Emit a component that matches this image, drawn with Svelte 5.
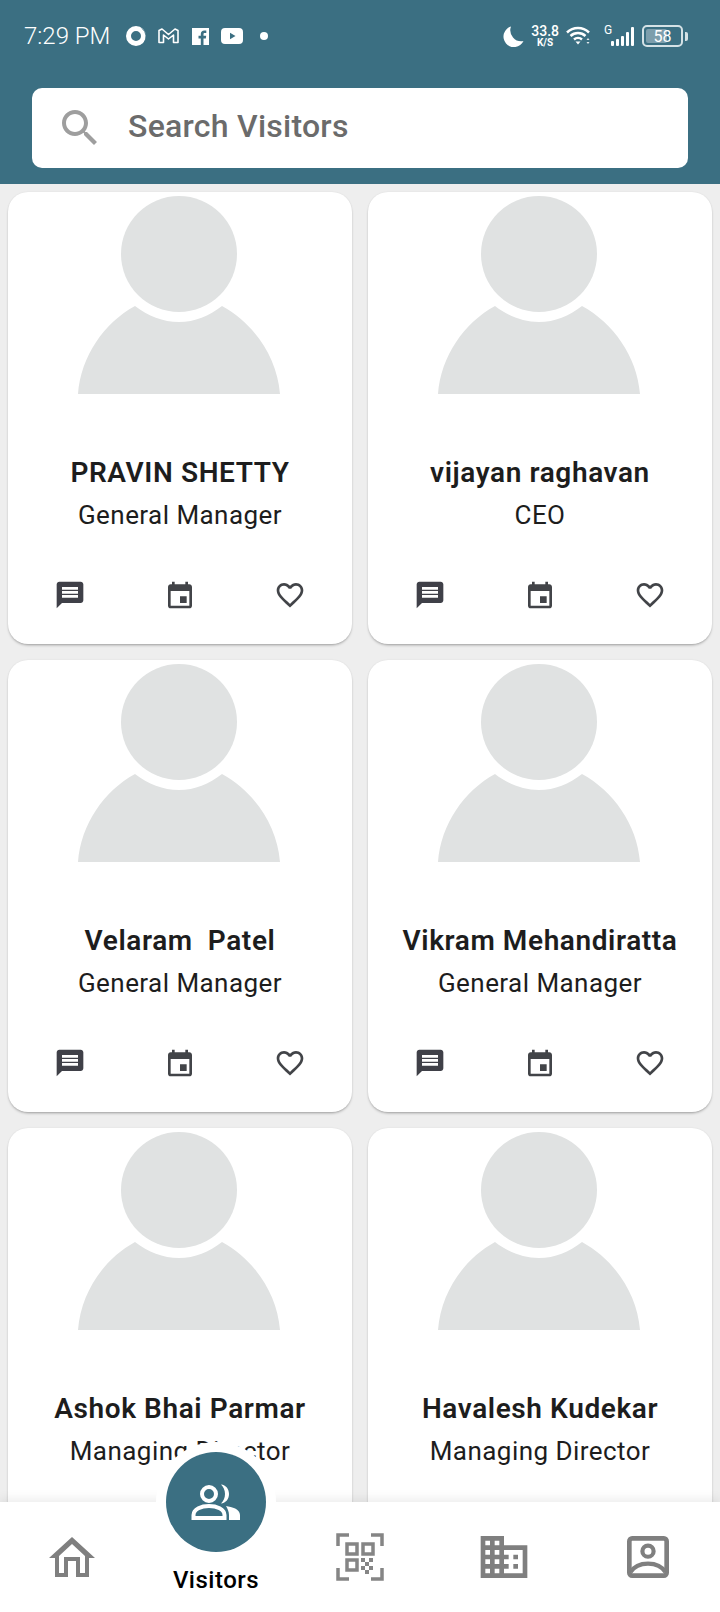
<script lang="ts">
  const visitors = [
    { name: 'PRAVIN SHETTY', role: 'General Manager' },
    { name: 'vijayan raghavan', role: 'CEO' },
    { name: 'Velaram  Patel', role: 'General Manager' },
    { name: 'Vikram Mehandiratta', role: 'General Manager' },
    { name: 'Ashok Bhai Parmar', role: 'Managing Director' },
    { name: 'Havalesh Kudekar', role: 'Managing Director' }
  ];
</script>

<div class="screen">
  <header class="top">
    <div class="status">
      <span class="clock">7:29 PM</span>
      <div class="notif">
        <svg width="22" height="22" viewBox="0 0 22 22"><circle cx="11" cy="11" r="7.500" fill="none" stroke="#fff" stroke-width="5"/><path d="M17 3.500a10 10 0 0 1 2 14" fill="none" stroke="#3b6f82" stroke-width=".8"/></svg>
        <svg width="21" height="16" viewBox="0 0 21 16"><path d="M1 14.500V2.500L4 1l6.500 5.500L17 1l3 1.500v12h-4.500V7l-5 4-5-4v7.500z" fill="none" stroke="#fff" stroke-width="1.600" stroke-linejoin="round"/></svg>
        <svg width="17" height="17" viewBox="0 0 17 17"><path fill="#fff" d="M0 0h17v17h-5.500v-6.500h2.300l.4-2.700h-2.700V6.200c0-.8.3-1.300 1.400-1.300h1.400V2.500c-.4 0-1.200-.1-2-.1-2.100 0-3.500 1.300-3.500 3.500v1.900H6.500v2.700h2.300V17H0z"/></svg>
        <svg width="22" height="16" viewBox="0 0 22 16"><path fill="#fff" fill-rule="evenodd" d="M4 0h14a4 4 0 0 1 4 4v8a4 4 0 0 1-4 4H4a4 4 0 0 1-4-4V4a4 4 0 0 1 4-4zm5 4.800v6.400L14.500 8z"/></svg>
        <span class="dot"></span>
      </div>
      <div class="sys">
        <svg width="21" height="21" viewBox="0 0 21 21"><path fill="#fff" d="M8 .5A10.500 10.500 0 1 0 20.500 15 11 11 0 0 1 8 .5z"/></svg>
        <div class="speed"><span>33.8</span><small>K/S</small></div>
        <svg width="25" height="20" viewBox="0 0 25 20">
          <path d="M1 6.500a16 16 0 0 1 22 0M4.500 10a11 11 0 0 1 15 0M8 13.500a6 6 0 0 1 8 0" fill="none" stroke="#fff" stroke-width="2.500"/>
          <path d="M9.500 15.500h5L12 18.500z" fill="#fff"/>
          <path d="M20.500 14h3l-1.500-2zM20.500 16h3L22 18z" fill="#fff" opacity=".85"/>
        </svg>
        <div class="net">
          <span class="g">G</span>
          <svg width="24" height="20" viewBox="0 0 24 20"><g fill="#fff"><rect x="0" y="15" width="3" height="5" rx="1"/><rect x="5" y="13" width="3" height="7" rx="1"/><rect x="10" y="10" width="3" height="10" rx="1"/><rect x="15" y="6" width="3" height="14" rx="1"/><rect x="20" y="1" width="3" height="19" rx="1"/></g></svg>
        </div>
        <div class="battery"><i class="level"></i><b>58</b></div>
        <span class="tip"></span>
      </div>
    </div>
    <div class="search">
      <svg width="48" height="48" viewBox="0 0 24 24"><path fill="#9e9e9e" d="M15.500 14h-.79l-.28-.27C15.410 12.590 16 11.110 16 9.500 16 5.910 13.090 3 9.500 3S3 5.910 3 9.500 5.910 16 9.500 16c1.610 0 3.090-.59 4.230-1.570l.27.28v.79l5 4.990L20.490 19l-4.990-5zm-6 0C7.010 14 5 11.990 5 9.500S7.010 5 9.500 5 14 7.010 14 9.500 11.990 14 9.500 14z"/></svg>
      <span class="placeholder">Search Visitors</span>
    </div>
  </header>

  <main class="list">
    {#each visitors as v}
      <article class="card">
        <svg class="avatar" width="204" height="198" viewBox="0 0 204 198">
          <circle cx="101" cy="58" r="58" fill="#e0e2e2"/>
          <path fill="#e0e2e2" d="M0 198C3 160 26 127 57 110C70 120 85 126 101 126C117 126 131 120 144 110C175 127 199 160 202 198z"/>
        </svg>
        <h2 class="name">{v.name}</h2>
        <p class="role">{v.role}</p>
        <div class="actions">
          <svg width="32" height="32" viewBox="0 0 24 24"><path fill="#3f4048" d="M20 2H4c-1.100 0-1.990.9-1.990 2L2 22l4-4h14c1.100 0 2-.9 2-2V4c0-1.100-.9-2-2-2zm-2 12H6v-2h12v2zm0-3H6V9h12v2zm0-3H6V6h12v2z"/></svg>
          <svg width="32" height="32" viewBox="0 0 24 24"><path fill="#424448" d="M19 4h-1V2h-2v2H8V2H6v2H5c-1.110 0-1.990.9-1.990 2L3 20c0 1.100.89 2 2 2h14c1.100 0 2-.9 2-2V6c0-1.100-.9-2-2-2zm0 16H5V9h14v11zm-2-7h-5v5h5v-5z"/></svg>
          <svg width="32" height="32" viewBox="0 0 24 24"><path fill="#424448" d="M16.500 3c-1.740 0-3.410.81-4.500 2.090C10.910 3.810 9.240 3 7.500 3 4.420 3 2 5.420 2 8.500c0 3.780 3.400 6.860 8.550 11.540L12 21.350l1.450-1.320C18.600 15.360 22 12.280 22 8.500 22 5.420 19.580 3 16.500 3zm-4.400 15.550l-.1.1-.1-.1C7.140 14.240 4 11.390 4 8.500 4 6.500 5.500 5 7.500 5c1.540 0 3.040.99 3.570 2.360h1.870C13.460 5.990 14.960 5 16.500 5c2 0 3.500 1.500 3.500 3.500 0 2.890-3.140 5.740-7.900 10.050z"/></svg>
        </div>
      </article>
    {/each}
  </main>

  <nav class="bar">
    <div class="item">
      <svg width="48" height="42" viewBox="0 0 48 42"><path fill="#7f7f7f" fill-rule="evenodd" d="M24 1L1 22h6v19h13V25h8v16h13V22h6zM24 8l13 12v17h-5V21H16v16h-5V20z"/></svg>
    </div>
    <div class="item">
      <div class="fab-ring">
        <div class="fab">
          <svg width="50" height="38" viewBox="0 0 50 38">
            <circle cx="18" cy="11" r="7" fill="none" stroke="#fff" stroke-width="4"/>
            <path fill="#fff" d="M30 1.500c5 .5 8 4.500 8 9.500s-3 9-8 9.500c2.500-2.500 4-5.800 4-9.500s-1.500-7-4-9.500z"/>
            <path fill="none" stroke="#fff" stroke-width="4" d="M2.500 35v-3c0-6 8-9 15.500-9s15.500 3 15.500 9v3z"/>
            <path fill="#fff" d="M35 23c6 .8 14 3.200 14 9v5h-11v-5c0-3.500-1.500-6.500-3-9z"/>
          </svg>
        </div>
      </div>
      <span class="label">Visitors</span>
    </div>
    <div class="item">
      <svg width="48" height="48" viewBox="0 0 48 48">
        <g fill="none" stroke="#858585" stroke-width="3.500">
          <path d="M13 2H2v11M35 2h11v11M13 46H2V35M35 46h11V35"/>
          <rect x="11" y="11" width="10" height="10"/>
          <rect x="27" y="11" width="10" height="10"/>
          <rect x="11" y="27" width="10" height="10"/>
        </g>
        <g fill="#858585">
          <rect x="25" y="25" width="4" height="4"/><rect x="33" y="25" width="4" height="4"/>
          <rect x="29" y="29" width="4" height="4"/><rect x="25" y="33" width="4" height="4"/>
          <rect x="33" y="33" width="4" height="4"/><rect x="29" y="37" width="4" height="4"/>
        </g>
      </svg>
    </div>
    <div class="item">
      <svg width="56" height="56" viewBox="0 0 24 24"><path fill="#7f7f7f" d="M12 7V3H2v18h20V7H12zM6 19H4v-2h2v2zm0-4H4v-2h2v2zm0-4H4V9h2v2zm0-4H4V5h2v2zm4 12H8v-2h2v2zm0-4H8v-2h2v2zm0-4H8V9h2v2zm0-4H8V5h2v2zm10 12h-8v-2h2v-2h-2v-2h2v-2h-2V9h8v10zm-2-8h-2v2h2v-2zm0 4h-2v2h2v-2z"/></svg>
    </div>
    <div class="item">
      <svg width="56" height="56" viewBox="0 0 24 24">
        <rect x="4" y="4" width="16" height="16" rx="1.200" fill="none" stroke="#7f7f7f" stroke-width="2"/>
        <circle cx="12" cy="9.500" r="2.400" fill="none" stroke="#7f7f7f" stroke-width="1.800"/>
        <path d="M4.500 18.500C6 16 9 14.800 12 14.800s6 1.200 7.500 3.700" fill="none" stroke="#7f7f7f" stroke-width="1.800"/>
      </svg>
    </div>
  </nav>
</div>

<style>
  :global(body) {
    margin: 0;
    background: #eeeeee;
  }

  .screen {
    width: 720px;
    height: 1612px;
    display: flex;
    flex-direction: column;
    overflow: hidden;
    background: #eeeeee;
    font-family: Roboto, "Liberation Sans", sans-serif;
  }

  .top {
    height: 184px;
    flex-shrink: 0;
    background: #3b6f82;
    box-sizing: border-box;
    padding: 0 32px 16px;
  }

  .status {
    height: 72px;
    margin: 0 0 16px -8px;
    display: flex;
    align-items: center;
    color: #fff;
  }

  .clock {
    font-size: 24px;
    font-weight: 300;
    width: 96px;
    flex-shrink: 0;
  }

  .notif {
    display: grid;
    grid-auto-flow: column;
    grid-auto-columns: 32px;
    align-items: center;
    justify-items: center;
  }

  .dot {
    width: 8px;
    height: 8px;
    border-radius: 50%;
    background: #fff;
  }

  .sys {
    margin-left: auto;
    display: flex;
    align-items: center;
  }

  .speed {
    display: flex;
    flex-direction: column;
    align-items: center;
    margin: 0 7px 0 7px;
    font-size: 14px;
    font-weight: 500;
    line-height: 13px;
  }

  .speed small {
    font-size: 10px;
    line-height: 10px;
    font-weight: 700;
  }

  .net {
    position: relative;
    display: flex;
    align-items: flex-end;
    margin-left: 13px;
    padding-left: 7px;
  }

  .g {
    font-size: 12px;
    line-height: 12px;
    position: absolute;
    left: 0;
    top: -2px;
  }

  .battery {
    position: relative;
    box-sizing: border-box;
    width: 41px;
    height: 22px;
    margin-left: 7px;
    border: 2px solid #d5e2e6;
    border-radius: 5px;
    display: flex;
    align-items: center;
    justify-content: center;
  }

  .level {
    position: absolute;
    left: 2px;
    top: 2px;
    bottom: 2px;
    width: 21px;
    background: #7d9eac;
    border-radius: 2px;
  }

  .battery b {
    position: relative;
    font-size: 16px;
    font-weight: 400;
  }

  .tip {
    width: 3px;
    height: 9px;
    margin-left: 2px;
    background: #d5e2e6;
    border-radius: 0 2px 2px 0;
  }

  .search {
    height: 80px;
    background: #fff;
    border-radius: 10px;
    display: flex;
    align-items: center;
    padding-left: 24px;
  }

  .placeholder {
    margin: -5px 0 0 24px;
    font-size: 32px;
    font-weight: 500;
    letter-spacing: 0.25px;
    color: #6b6b6b;
  }

  .list {
    flex: 1;
    min-height: 0;
    box-sizing: border-box;
    padding: 8px;
    display: grid;
    grid-template-columns: 344px 344px;
    grid-auto-rows: 452px;
    gap: 16px;
    overflow: hidden;
  }

  .card {
    background: #fff;
    border-radius: 20px;
    box-shadow: 0 2px 3px -1px rgba(0, 0, 0, 0.35), 0 0 2px rgba(0, 0, 0, 0.08);
    display: flex;
    flex-direction: column;
    align-items: center;
    color: #1d1d1d;
  }

  .avatar {
    margin-top: 4px;
    flex-shrink: 0;
  }

  .name {
    margin: 65px 0 0;
    font-size: 28px;
    line-height: 28px;
    font-weight: 600;
    letter-spacing: 0.6px;
    white-space: pre;
  }

  .role {
    margin: 14px 0 0;
    font-size: 26px;
    line-height: 28px;
    font-weight: 400;
    letter-spacing: 0.45px;
  }

  .actions {
    margin-top: auto;
    margin-bottom: 33px;
    align-self: stretch;
    padding: 0 46px;
    display: flex;
    justify-content: space-between;
  }

  .bar {
    position: relative;
    height: 110px;
    flex-shrink: 0;
    background: #fff;
    box-shadow: 0 -3px 10px rgba(0, 0, 0, 0.08);
    display: grid;
    grid-template-columns: repeat(5, 144px);
  }

  .item {
    position: relative;
    display: flex;
    align-items: center;
    justify-content: center;
  }

  .fab-ring {
    position: absolute;
    left: 12px;
    top: -60px;
    width: 120px;
    height: 120px;
    border-radius: 50%;
    background: #fff;
    display: flex;
    align-items: center;
    justify-content: center;
  }

  .fab {
    width: 100px;
    height: 100px;
    border-radius: 50%;
    background: #3b6f82;
    display: flex;
    align-items: center;
    justify-content: center;
  }

  .label {
    position: absolute;
    left: 0;
    right: 0;
    top: 63px;
    text-align: center;
    font-size: 24px;
    line-height: 30px;
    font-weight: 500;
    letter-spacing: 0.5px;
    color: #000;
  }
</style>
